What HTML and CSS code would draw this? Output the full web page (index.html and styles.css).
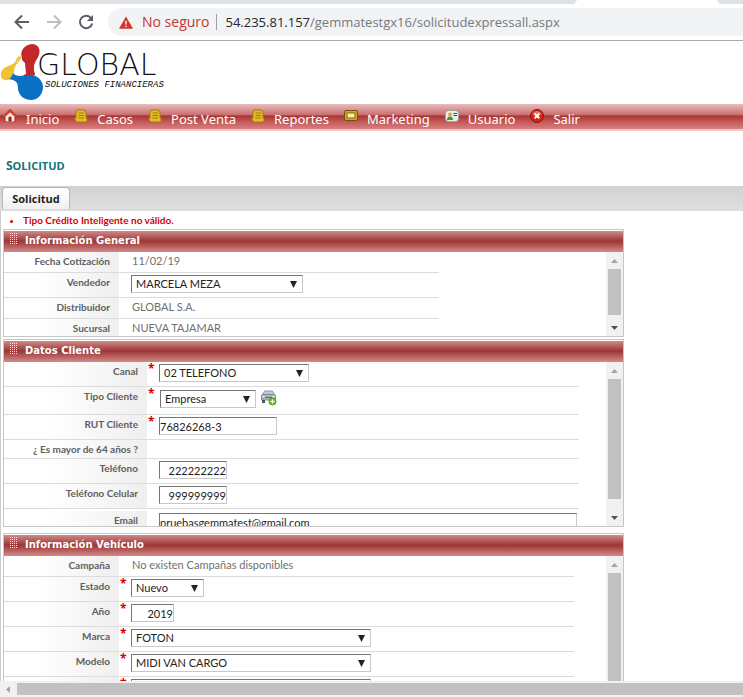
FILE: index.html
```html
<!DOCTYPE html>
<html lang="es">
<head>
<meta charset="utf-8">
<title>Solicitud</title>
<link rel="stylesheet" href="styles.css">
</head>
<body>
<div class="tabstrip"><span class="active-tab"></span></div>
<div class="toolbar">
  <button class="tool" aria-label="Atrás"><svg width="16" height="16" viewBox="0 0 16 16" fill="none" stroke="#5b5e63" stroke-width="2"><path d="M15 8H2M8 1.500L1.500 8L8 14.500"/></svg></button>
  <button class="tool" aria-label="Adelante"><svg width="16" height="16" viewBox="0 0 16 16" fill="none" stroke="#bcbec1" stroke-width="2"><path d="M1 8H14M8 1.500L14.500 8L8 14.500"/></svg></button>
  <button class="tool" aria-label="Recargar"><svg width="16" height="16" viewBox="0 0 16 16"><path d="M13.200 4.300A6.200 6.200 0 1 0 14.200 9.500" fill="none" stroke="#5b5e63" stroke-width="2"/><path d="M15 1V7H9Z" fill="#5b5e63"/></svg></button>
  <div class="address">
    <svg width="14" height="13" viewBox="0 0 16 14"><path d="M8 0L16 14H0Z" fill="#d0342b"/><path d="M7.200 5H8.800V9.300H7.200ZM7.200 10.600H8.800V12.200H7.200Z" fill="#fff"/></svg>
    <span class="insecure">No seguro</span>
    <span class="url"><b>54.235.81.157</b>/gemmatestgx16/solicitudexpressall.aspx</span>
  </div>
</div>

<main class="page">
  <header class="brand">
    <svg class="mark" width="44" height="58" viewBox="0 0 44 58">
      <path d="M22 15C19 7 26 1 33 1C40 2 41 9 38 14C35 19 32 22 35 32L24 34Z" fill="#c4272b"/>
      <path d="M22 14C17 21 15 24 14 30C13 35 9 38 5 37C0 36 0 30 3 26C7 22 14 23 16 17C17 14 20 12 22 14Z" fill="#f3c032"/>
      <path d="M13 30C16 34 22 33 26 32C36 30 43 37 43 44C43 51 38 57 31 57C24 57 18 52 18 45C18 38 14 37 9 36C11 35 12 33 13 30Z" fill="#0b6fc4"/>
      <path d="M20 15L25 20L26 31Q20 34 14 30Q14 20 20 15Z" fill="#fff"/>
      <path d="M22 15C23 18 25 19 26 21C28 26 27 29 26 32H35C32 22 35 19 38 14L30 8Z" fill="#c4272b"/>
      <path d="M22 13C21 17 18 19 16 22Q14 25 13 31L8 28L14 22Z" fill="#f3c032"/>
    </svg>
    <div class="wordmark"><span class="name">GLOBAL</span><span class="tagline">SOLUCIONES FINANCIERAS</span></div>
  </header>

  <nav class="menu">
    <a href="#"><svg width="14" height="14" viewBox="0 0 14 14"><path d="M7 0L14 7L12.500 8.500V13H1.500V8.500L0 7Z" fill="#b5201a"/><path d="M7 3L11.500 7.500V12.500H2.500V7.500Z" fill="#f5e9e4"/><path d="M0 7L7 0L14 7L12.500 8.300L7 3L1.500 8.300Z" fill="#dc3b28"/><path d="M5.500 12.500V8.500Q7 6.500 8.500 8.500V12.500Z" fill="#a02018"/></svg>Inicio</a>
    <a href="#"><svg width="14" height="14" viewBox="0 0 14 14"><path d="M3 1H9Q12 1 12 4V9H13V12Q13 13 11 13H3L1 11V9H2V3Z" fill="#e3bb25" stroke="#a07c10"/><path d="M4.500 4H10M4.500 6.500H10M4.500 9H10" stroke="#a07c10"/></svg>Casos</a>
    <a href="#"><svg width="14" height="14" viewBox="0 0 14 14"><path d="M3 1H9Q12 1 12 4V9H13V12Q13 13 11 13H3L1 11V9H2V3Z" fill="#e3bb25" stroke="#a07c10"/><path d="M4.500 4H10M4.500 6.500H10M4.500 9H10" stroke="#a07c10"/></svg>Post Venta</a>
    <a href="#"><svg width="14" height="14" viewBox="0 0 14 14"><path d="M3 1H9Q12 1 12 4V9H13V12Q13 13 11 13H3L1 11V9H2V3Z" fill="#e3bb25" stroke="#a07c10"/><path d="M4.500 4H10M4.500 6.500H10M4.500 9H10" stroke="#a07c10"/></svg>Reportes</a>
    <a href="#"><svg width="14" height="14" viewBox="0 0 14 14"><rect x=".5" y="1.500" width="13" height="10" rx="1.500" fill="#d9a81c" stroke="#6f5208"/><rect x="3" y="4" width="8" height="5" fill="#f8efb8" stroke="#8a6a0c"/></svg>Marketing</a>
    <a href="#"><svg width="14" height="14" viewBox="0 0 14 14"><rect x=".5" y="1.500" width="13" height="11" rx="3" fill="#e9eee9" stroke="#9aa5a2"/><circle cx="5" cy="5.500" r="2" fill="#e2a63c"/><path d="M2 11Q2 7.500 5 7.500Q8 7.500 8 11Z" fill="#3c9a3c"/><path d="M8.500 4.500H12M8.500 6.500H12" stroke="#446"/></svg>Usuario</a>
    <a href="#"><svg width="14" height="14" viewBox="0 0 14 14"><circle cx="7" cy="7" r="6.500" fill="#d3231b" stroke="#8c1511"/><path d="M2 5Q7 -1 12 5Q7 7 2 5Z" fill="#ef7466"/><path d="M4.700 4.700L9.300 9.300M9.300 4.700L4.700 9.300" stroke="#fff" stroke-width="2"/></svg>Salir</a>
  </nav>

  <h1><span>S</span>OLICITUD</h1>

  <div class="tabs"><button class="tab">Solicitud</button></div>

  <div class="content">
    <ul class="errors"><li>Tipo Crédito Inteligente no válido.</li></ul>

    <section class="panel general">
      <h2>Información General</h2>
      <div class="body">
        <div class="rows">
          <div class="row short"><span class="label">Fecha Cotización</span><span class="value">11/02/19</span></div>
          <div class="row"><label class="label" for="vendedor">Vendedor</label><span class="pick w172"><select id="vendedor"><option>MARCELA MEZA</option></select></span></div>
          <div class="row short"><span class="label">Distribuidor</span><span class="value">GLOBAL S.A.</span></div>
          <div class="row short"><span class="label">Sucursal</span><span class="value">NUEVA TAJAMAR</span></div>
        </div>
        <div class="vbar"><i class="up"></i><i class="thumb"></i><i class="down"></i></div>
      </div>
    </section>

    <section class="panel client">
      <h2>Datos Cliente</h2>
      <div class="body">
        <div class="rows">
          <div class="row"><label class="label" for="canal">Canal</label><span class="req">*</span><span class="pick w150"><select id="canal"><option>02 TELEFONO</option></select></span></div>
          <div class="row tall"><label class="label" for="tipo">Tipo Cliente</label><span class="req">*</span><span class="pick w96"><select id="tipo"><option>Empresa</option></select></span>
            <button class="add" aria-label="Agregar vehículo"><svg width="16" height="16" viewBox="0 0 16 16"><path d="M3.500 1H11.500L13.500 5H1.500Z" fill="#b9cbd8" stroke="#8d9aa5"/><path d="M.5 6Q.5 4.500 2 4.500H13Q14.500 4.500 14.500 6V10H.5Z" fill="#a9b4bd" stroke="#808b95"/><path d="M1 10H4V13H1ZM11 10H14V13H11Z" fill="#4d545b"/><path d="M4 7.500H11" stroke="#5b6670"/><path d="M1.500 6.500H3.500M11.500 6.500H13.500" stroke="#fff"/><circle cx="11.500" cy="11.500" r="3.500" fill="#7cc03c" stroke="#57962a"/><path d="M11.500 9.500V13.500M9.500 11.500H13.500" stroke="#fff"/></svg></button></div>
          <div class="row"><label class="label" for="rut">RUT Cliente</label><span class="req">*</span><input class="w118" id="rut" value="76826268-3"></div>
          <div class="row shorter"><span class="label">¿ Es mayor de 64 años ?</span></div>
          <div class="row"><label class="label" for="tel">Teléfono</label><span class="req"></span><input class="num w68" id="tel" value="222222222"></div>
          <div class="row"><label class="label" for="cel">Teléfono Celular</label><span class="req"></span><input class="num w68" id="cel" value="999999999"></div>
          <div class="row spaced"><label class="label" for="email">Email</label><span class="req"></span><input class="wide" id="email" value="pruebasgemmatest@gmail.com"></div>
        </div>
        <div class="vbar"><i class="up"></i><i class="thumb"></i><i class="down"></i></div>
      </div>
    </section>

    <section class="panel vehicle">
      <h2>Información Vehículo</h2>
      <div class="body">
        <div class="rows">
          <div class="row short"><span class="label">Campaña</span><span class="value">No existen Campañas disponibles</span></div>
          <div class="row"><label class="label" for="estado">Estado</label><span class="req">*</span><span class="pick w73"><select id="estado"><option>Nuevo</option></select></span></div>
          <div class="row"><label class="label" for="anio">Año</label><span class="req">*</span><input class="num w43" id="anio" value="2019"></div>
          <div class="row"><label class="label" for="marca">Marca</label><span class="req">*</span><span class="pick w240"><select id="marca"><option>FOTON</option></select></span></div>
          <div class="row"><label class="label" for="modelo">Modelo</label><span class="req">*</span><span class="pick w240"><select id="modelo"><option>MIDI VAN CARGO</option></select></span></div>
          <div class="row"><span class="label"></span><span class="req">*</span><span class="pick w240"><select aria-label="Versión"><option></option></select></span></div>
        </div>
        <div class="vbar"><i class="up"></i><i class="thumb"></i></div>
      </div>
    </section>
  </div>
</main>
<div class="hbar"><i class="left"></i><i class="thumb"></i></div>
</body>
</html>
```
FILE: styles.css
```css
* { box-sizing: border-box; }
body {
  margin: 0;
  height: 100vh;
  display: flex;
  flex-direction: column;
  overflow: hidden;
  background: #fff;
  color: #333;
  font: 12px/20px "Open Sans", "Noto Sans", sans-serif;
}
button { border: 0; padding: 0; background: none; font: inherit; color: inherit; }
svg { display: block; flex: none; }

/* Browser chrome */
.tabstrip { flex: none; height: 4px; background: #dee1e6; display: flex; justify-content: flex-end; padding-right: 24px; }
.active-tab { width: 144px; background: #fff; border-radius: 4px 4px 0 0; }
.toolbar {
  flex: none;
  display: flex;
  align-items: center;
  gap: 16px;
  height: 37px;
  padding-left: 14px;
  border-bottom: 1px solid #a9abae;
}
.address {
  flex: 1;
  display: flex;
  align-items: center;
  height: 28px;
  margin-left: -2px;
  padding-left: 11px;
  border-radius: 14px 0 0 14px;
  background: #f1f3f4;
  white-space: nowrap;
}
.insecure { margin-left: 9px; padding-right: 7px; border-right: 1px solid #a0a3a6; font-size: 14px; line-height: 16px; color: #c5372f; }
.url { margin-left: 8px; font-size: 13px; color: #75797e; }
.url b { font-weight: 400; color: #25282c; }

/* Page */
.page { flex: 1; min-height: 0; overflow: hidden; display: flex; flex-direction: column; }
.brand { flex: none; display: flex; height: 63px; padding-top: 2px; }
.wordmark { display: flex; flex-direction: column; margin-left: -7px; padding-top: 6px; color: #111; }
.name { font: 200 30px/31px "DejaVu Sans", sans-serif; }
.tagline { margin-left: 8px; font: italic 9px/11px "Liberation Mono", monospace; }
.menu {
  flex: none;
  display: flex;
  gap: 15px;
  height: 27px;
  padding: 5px 0 0 3px;
  background: linear-gradient(#e8bcbc 0, #c96f6f 40%, #a93434 44%, #c25252 62%, #d68080 92%, #efcaca 93%);
}
.menu a { display: flex; gap: 9px; color: #fff; font: 13px/20px "Noto Sans", sans-serif; text-decoration: none; white-space: nowrap; }
h1 { flex: none; margin: 25px 0 10px 6px; font: bold 11px/20px "Open Sans", sans-serif; color: #0f7478; }
h1 span { font-size: 12px; }
.tabs { flex: none; height: 23px; padding: 1px 2px 0; background: linear-gradient(#d2d2d2, #dedede); }
.tab {
  display: block;
  width: 68px;
  height: 22px;
  border: 1px solid #b5b5b5;
  border-bottom: 0;
  border-radius: 4px 4px 0 0;
  background: linear-gradient(#fff, #f0f0f0);
  font: bold 11px/20px "Open Sans", sans-serif;
  color: #222;
}
.content { flex: 1; min-height: 0; overflow: hidden; display: flex; flex-direction: column; padding: 0 2px; border-top: 2px solid #dcdcdc; border-left: 1px solid #ccc; }
.errors { flex: none; margin: 0; padding: 0 0 0 20px; font: bold 10px/18px Lato, sans-serif; color: #d40000; }

/* Panels */
.panel { flex: none; display: flex; flex-direction: column; width: 100%; max-width: 621px; margin-bottom: 2px; padding-top: 1px; border: 1px solid #c6c6c6; }
.client { margin-bottom: 6px; }
.vehicle { flex: 1; min-height: 0; margin: 0; border-bottom: 0; }
h2 {
  position: relative;
  flex: none;
  margin: 0;
  padding: 0 0 2px 21px;
  background: linear-gradient(#d08a8a 0, #9c3636 48%, #d28a8a 100%);
  color: #fff;
  font: bold 10px/19px "DejaVu Sans", sans-serif;
}
h2::before {
  content: "";
  position: absolute;
  left: 5px;
  top: 2px;
  width: 8px;
  height: 12px;
  background: conic-gradient(#f6e2e2 25%, transparent 0) 0 0 / 2px 2px;
}
.body { flex: 1; min-height: 0; display: flex; justify-content: space-between; overflow: hidden; }
.general .body { flex: none; height: 84px; }
.client .body { flex: none; height: 164px; }
.rows { flex: 1; min-width: 0; }
.general .rows { max-width: 435px; }
.client .rows { max-width: 575px; }
.vehicle .rows { max-width: 570px; }
.row { display: flex; align-items: flex-start; height: 25px; border-bottom: 1px solid #dcdcdc; }
.short { height: 21px; }
.shorter { height: 19px; }
.tall { height: 28px; }
.label {
  flex: none;
  align-self: stretch;
  width: 115px;
  padding-right: 9px;
  background: linear-gradient(90deg, #fff 30%, #efefef);
  color: #606060;
  font: bold 10px/18px Lato, sans-serif;
  text-align: right;
}
.client .label { width: 143px; }
.value { padding-left: 13px; font: 11px/18px Lato, sans-serif; color: #707070; }
.req { width: 12px; flex: none; padding-left: 1px; color: #d40000; font: bold 12px/14px "Open Sans", sans-serif; }
.pick { position: relative; display: block; margin-top: 2px; }
.general .pick { margin-left: 12px; }
.tall .pick { margin: 3px 0 0 1px; }
.pick::after {
  content: "";
  position: absolute;
  right: 6px;
  top: 6px;
  width: 7px;
  height: 7px;
  background: #222;
  clip-path: polygon(0 0, 100% 0, 50% 100%);
  pointer-events: none;
}
select, input {
  display: block;
  height: 18px;
  border: 1px solid;
  border-color: #767676 #c8c8c8 #c8c8c8 #767676;
  border-radius: 0;
  background: #fff;
  color: #222;
  font: 11px/16px Lato, sans-serif;
  appearance: none;
  outline: 0;
}
select { width: 100%; padding: 0 4px; }
input { margin-top: 2px; padding: 0; }
.num { text-align: right; }
.w43 { width: 43px; }
.w68 { width: 68px; }
.w73 { width: 73px; }
.w96 { width: 96px; }
.w118 { width: 118px; }
.w150 { width: 150px; }
.w172 { width: 172px; }
.w240 { width: 240px; }
.wide { flex: 1; margin-right: 2px; }
.spaced { padding-top: 2px; }
.add { margin: 3px 0 0 5px; }

/* Scroll bars */
.vbar { flex: none; display: flex; flex-direction: column; width: 17px; padding: 0 2px; background: #f1f1f1; }
.vbar .thumb { flex: 1; background: #c1c1c1; }
.general .down { margin-top: 4px; }
.client .down { margin-top: 10px; }
.up, .down, .left { flex: none; position: relative; height: 17px; }
.up::before, .down::before, .left::before { content: ""; position: absolute; background: #a3a3a3; }
.up::before, .down::before { left: 3px; top: 7px; width: 7px; height: 4px; clip-path: polygon(50% 0, 100% 100%, 0 100%); }
.down::before { background: #505050; clip-path: polygon(0 0, 100% 0, 50% 100%); }
.hbar { flex: none; display: flex; height: 16px; padding: 2px 0; background: #f1f1f1; }
.hbar .thumb { flex: 1; background: #c1c1c1; }
.left { width: 17px; height: 12px; }
.left::before { left: 6px; top: 3px; width: 4px; height: 7px; clip-path: polygon(0 50%, 100% 0, 100% 100%); }
```
